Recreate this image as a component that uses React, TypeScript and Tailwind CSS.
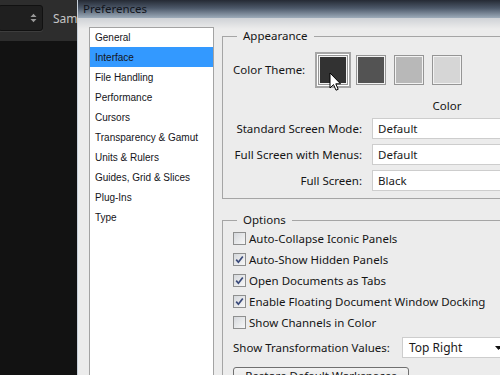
import React from "react";

const listItems = [
  "General",
  "Interface",
  "File Handling",
  "Performance",
  "Cursors",
  "Transparency & Gamut",
  "Units & Rulers",
  "Guides, Grid & Slices",
  "Plug-Ins",
  "Type",
];

function Swatch({ color }: { color: string }) {
  return (
    <div
      className="w-[30px] h-[30px] border border-[#959595] shadow-[inset_0_0_0_1px_#f2f2f2]"
      style={{ backgroundColor: color }}
    />
  );
}

function Checkbox({ checked, label }: { checked: boolean; label: string }) {
  return (
    <div className="h-[21px] flex items-center">
      <div className="w-[13px] h-[13px] border border-[#8e8f8f] bg-[linear-gradient(135deg,#d5d8dc,#f7f7f7)] flex items-center justify-center">
        {checked && (
          <svg width="11" height="11" viewBox="0 0 11 11">
            <path d="M2.2 5.6 L4.4 8.2 L8.8 2.4" fill="none" stroke="#3a4a7a" strokeWidth="1.7" />
          </svg>
        )}
      </div>
      <span className="ml-[3px] whitespace-nowrap">{label}</span>
    </div>
  );
}

function Field({ text, w }: { text: string; w: string }) {
  return (
    <div className={`h-[21px] ${w} bg-white border border-[#cdcdcd] pl-[5px] flex items-center text-[#1a1a1a] whitespace-nowrap`}>
      {text}
    </div>
  );
}

export default function App() {
  return (
    <div className="w-[500px] h-[375px] overflow-hidden flex bg-[#121212]">
      {/* Background app */}
      <div className="w-[77px] shrink-0 flex flex-col overflow-hidden">
        <div className="h-[41px] shrink-0 bg-[#2d2d2d] flex items-center overflow-hidden">
          <div className="w-[45px] h-[26px] shrink-0 mt-[-6px] ml-[-2px] rounded-[3px] bg-[#1f1f1f] border border-[#111111] shadow-[0_1px_0_#3d3d3d] flex items-center justify-end pr-[5px]">
            <svg width="7" height="10" viewBox="0 0 7 10">
              <path d="M0.5 4 L3.5 0.8 L6.5 4 Z" fill="#9a9a9a" />
              <path d="M0.5 6 L3.5 9.2 L6.5 6 Z" fill="#9a9a9a" />
            </svg>
          </div>
          <span className="ml-[10px] mt-[-4px] shrink-0 text-[12px] text-[#c4c4c4] font-['Noto_Sans',sans-serif] whitespace-nowrap">
            Sample
          </span>
        </div>
        <div className="flex-1 bg-[#121212]" />
      </div>

      {/* Dialog */}
      <div className="w-[423px] shrink-0 flex flex-col border-l border-[#c7d0da] font-['Noto_Sans',sans-serif] text-[11.5px] text-[#151515]">
        <div className="h-[18px] shrink-0 bg-[linear-gradient(to_bottom,#252a34_0%,#4c5869_45%,#9eacba_100%)] pl-[5px] flex items-center leading-none">
          <span className="text-[11.5px] text-[#12151c]">Preferences</span>
        </div>
        <div className="flex-1 flex pt-[9px] pl-[11px] bg-[linear-gradient(to_bottom,#cfd2d6_0px,#ececec_11px)]">
          {/* List */}
          <div className="w-[125px] shrink-0 bg-white border border-[#a3a3a3] border-b-0 flex flex-col font-['Liberation_Sans',Arial,sans-serif] text-[10px] text-[#141420]">
            {listItems.map((it, i) => (
              <div
                key={it}
                className={`${i === 0 ? "h-[19px]" : "h-[20px]"} pl-[5px] flex items-center whitespace-nowrap ${
                  i === 1 ? "bg-[#3399ff]" : ""
                }`}
              >
                {it}
              </div>
            ))}
          </div>

          {/* Right pane */}
          <div className="ml-[8px] pt-[1px] flex flex-col">
            <fieldset className="w-[320px] border border-[#a5a5a5] border-r-0 pb-[7px]">
              <legend className="ml-[14px] px-[6px] leading-[16px]">Appearance</legend>
              <div className="flex items-center pl-[10px] mt-[8px]">
                <span className="w-[82px] whitespace-nowrap">Color Theme:</span>
                <div className="flex gap-[2px]">
                  <div className="relative w-[36px] h-[36px] border-2 border-[#a6a6a6] bg-white p-[1px]">
                    <Swatch color="#323232" />
                    <svg
                      className="absolute left-[12px] top-[18px]"
                      width="13"
                      height="20"
                      viewBox="0 0 13 20"
                    >
                      <path
                        d="M1 1 L1 16 L4.5 12.6 L7 18.2 L9.2 17.3 L6.8 11.8 L11.5 11.8 Z"
                        fill="#ffffff"
                        stroke="#000000"
                        strokeWidth="1"
                        strokeLinejoin="miter"
                      />
                    </svg>
                  </div>
                  <div className="w-[36px] h-[36px] flex items-center justify-center">
                    <Swatch color="#535353" />
                  </div>
                  <div className="w-[36px] h-[36px] flex items-center justify-center">
                    <Swatch color="#b8b8b8" />
                  </div>
                  <div className="w-[36px] h-[36px] flex items-center justify-center">
                    <Swatch color="#d6d6d6" />
                  </div>
                </div>
              </div>
              <div className="grid grid-cols-[129px_150px] gap-x-[10px] gap-y-[5px] pl-[10px]">
                <div className="mt-[10px]" />
                <div className="mt-[10px] leading-[16px] text-center mb-[-1px]">Color</div>
                <div className="h-[21px] flex items-center justify-end whitespace-nowrap">Standard Screen Mode:</div>
                <Field text="Default" w="w-[150px]" />
                <div className="h-[21px] flex items-center justify-end whitespace-nowrap">Full Screen with Menus:</div>
                <Field text="Default" w="w-[150px]" />
                <div className="h-[21px] flex items-center justify-end whitespace-nowrap">Full Screen:</div>
                <Field text="Black" w="w-[150px]" />
              </div>
            </fieldset>

            <fieldset className="w-[320px] mt-[13px] border border-[#a5a5a5] border-r-0 border-b-0">
              <legend className="ml-[14px] px-[6px] leading-[16px]">Options</legend>
              <div className="pl-[10px] flex flex-col">
                <Checkbox checked={false} label="Auto-Collapse Iconic Panels" />
                <Checkbox checked={true} label="Auto-Show Hidden Panels" />
                <Checkbox checked={true} label="Open Documents as Tabs" />
                <Checkbox checked={true} label="Enable Floating Document Window Docking" />
                <Checkbox checked={false} label="Show Channels in Color" />
                <div className="mt-[4px] flex items-center">
                  <span className="w-[159px] whitespace-nowrap">Show Transformation Values:</span>
                  <div className="ml-[10px] w-[106px] h-[21px] bg-white border border-[#cdcdcd] pl-[6px] pr-[5px] flex items-center justify-between text-[12px] text-[#1a1a1a]">
                    <span className="whitespace-nowrap">Top Right</span>
                    <svg width="7" height="4" viewBox="0 0 7 4">
                      <path d="M0 0 L7 0 L3.5 4 Z" fill="#111111" />
                    </svg>
                  </div>
                </div>
                <div className="mt-[9px] w-[176px] h-[23px] rounded-[3px] border border-[#707070] bg-[linear-gradient(to_bottom,#f3f3f3,#dcdcdc)] flex items-start justify-center leading-[16px] whitespace-nowrap">
                  Restore Default Workspaces
                </div>
              </div>
            </fieldset>
          </div>
        </div>
      </div>
    </div>
  );
}
